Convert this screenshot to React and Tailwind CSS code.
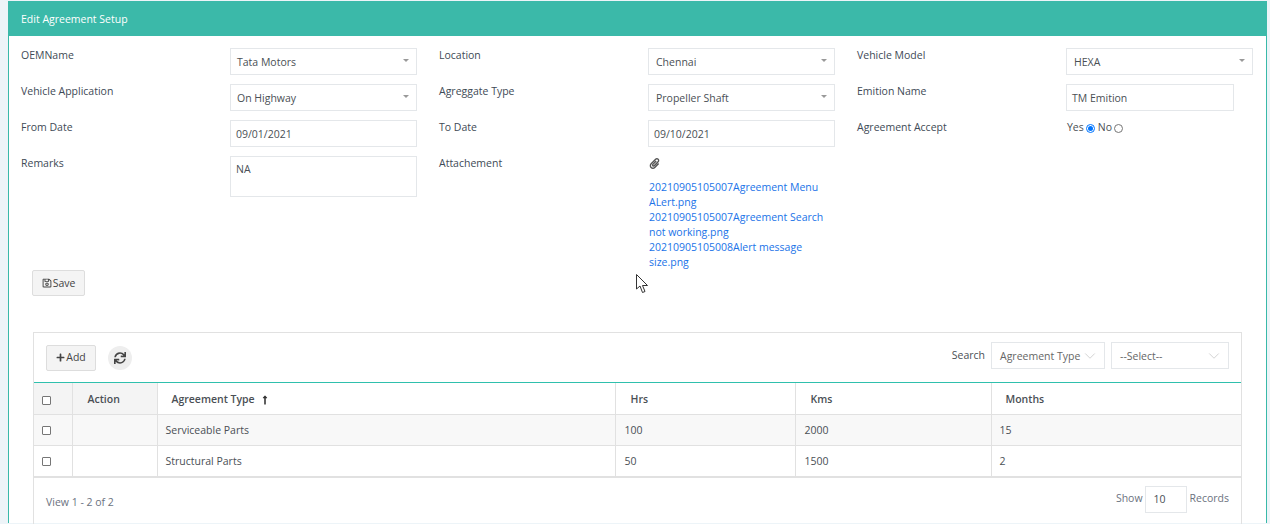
import React from 'react';
import { ChevronDown } from 'lucide-react';
import { FaPaperclip, FaPlus, FaRegSave, FaSync, FaLongArrowAltUp } from 'react-icons/fa';

const Label = ({ children }) => (
  <div className="w-[209px] shrink-0 pt-[3px] leading-[15px] text-[#3e4a56]">{children}</div>
);

const SelectBox = ({ value, inset = 'pl-[6px]' }) => (
  <div className={`mt-[3px] flex h-[27px] w-[187px] items-center justify-between border border-[#e4e7ea] bg-white pr-[7px] text-[#4a4f55] ${inset}`}>
    <span className="pt-[2px]">{value}</span>
    <span className="mb-[2px] h-0 w-0 border-x-[3px] border-t-[3px] border-x-transparent border-t-[#999]" />
  </div>
);

const TextBox = ({ value, width = 'w-[187px]' }) => (
  <div className={`mt-[3px] flex h-[27px] items-center border border-[#e4e7ea] bg-white pl-[5px] pt-[2px] text-[#4a4f55] ${width}`}>
    {value}
  </div>
);

const Field = ({ label, children }) => (
  <div className="flex h-[36px] w-[418px] shrink-0">
    <Label>{label}</Label>
    {children}
  </div>
);

const Check = () => (
  <span className="block h-[9px] w-[9px] rounded-[1px] border border-[#767676] bg-white" />
);

const rows = [
  { type: 'Serviceable Parts', hrs: '100', kms: '2000', months: '15', bg: 'bg-[#f8f8f8]' },
  { type: 'Structural Parts', hrs: '50', kms: '1500', months: '2', bg: 'bg-white' },
];

const App = () => {
  return (
    <div className="h-[524px] w-[1270px] overflow-hidden bg-[#edf4f8] pl-2 pr-[3px] pt-px font-['Open_Sans',sans-serif] text-[10.5px] text-[#3e4a56]">
      <div className="h-[522px] border-x border-[#39b9a9] bg-white">
        <div className="-mx-px flex h-[35px] items-center bg-[#3bb9a9] pl-[13px] pt-[2px] text-white">Edit Agreement Setup</div>

        <div className="pl-3 pt-[9px]">
          <div className="flex">
            <Field label="OEMName"><SelectBox value="Tata Motors" /></Field>
            <Field label="Location"><SelectBox value="Chennai" inset="pl-[7px]" /></Field>
            <Field label="Vehicle Model"><SelectBox value="HEXA" inset="pl-[7px]" /></Field>
          </div>
          <div className="flex">
            <Field label="Vehicle Application"><SelectBox value="On Highway" /></Field>
            <Field label="Agreggate Type"><SelectBox value="Propeller Shaft" inset="pl-[7px]" /></Field>
            <Field label="Emition Name"><TextBox value="TM Emition" width="w-[168px]" /></Field>
          </div>
          <div className="flex">
            <Field label="From Date"><TextBox value="09/01/2021" /></Field>
            <Field label="To Date"><TextBox value="09/10/2021" /></Field>
            <Field label="Agreement Accept">
              <div className="ml-px mt-[2px] flex h-[15px] items-center pt-[3px] text-[#4a4f55]">
                <span>Yes</span>
                <span className="ml-[2px] flex h-[9px] w-[9px] items-center justify-center rounded-full border border-[#0075ff]">
                  <span className="h-[5px] w-[5px] rounded-full bg-[#0075ff]" />
                </span>
                <span className="ml-[3px]">No</span>
                <span className="ml-[2px] h-[9px] w-[9px] rounded-full border border-[#767676]" />
              </div>
            </Field>
          </div>
          <div className="flex">
            <div className="flex w-[418px] shrink-0">
              <Label><span className="text-[#3e4a56]">Remarks</span></Label>
              <div className="mt-[3px] h-[41px] w-[187px] border border-[#e4e7ea] pl-[5px] pt-[5px] text-[#4a4f55]">NA</div>
            </div>
            <div className="flex w-[418px] shrink-0">
              <Label>Attachement</Label>
              <div className="w-[187px] pt-[5px]">
                <FaPaperclip className="ml-px h-[11px] w-[11px] text-[#555]" />
                <div className="ml-px mt-[11px] w-[180px] leading-[15px] text-[#1a73e8]">
                  <div>20210905105007Agreement Menu ALert.png</div>
                  <div>20210905105007Agreement Search not working.png</div>
                  <div>20210905105008Alert message size.png</div>
                </div>
              </div>
            </div>
          </div>
        </div>

        <div className="pl-[23px]">
          <button className="flex h-[26px] w-[53px] items-center justify-center rounded-[2px] border border-[#ddd] bg-[#f4f4f4] text-[#444]">
            <FaRegSave className="h-[10px] w-[10px]" />
            <span className="ml-px pt-[2px]">Save</span>
          </button>
        </div>

        <div className="ml-[24px] mt-[36px] h-[200px] w-[1209px] border-x border-t border-[#e1e1e1]">
          <div className="flex h-[50px] items-center justify-between border-b border-[#2fc0ad] pl-3 pr-3">
            <div className="flex items-center">
              <button className="flex h-[26px] w-[50px] items-center justify-center rounded-[2px] border border-[#ddd] bg-[#f4f4f4] text-[#444]">
                <FaPlus className="h-[9px] w-[9px]" />
                <span className="ml-px">Add</span>
              </button>
              <span className="ml-3 flex h-6 w-6 items-center justify-center rounded-full bg-[#eee] text-[#444]">
                <FaSync className="h-[12px] w-[12px]" />
              </span>
            </div>
            <div className="mb-[4px] flex items-center text-[#4a4f55]">
              <span className="mr-[6px] pt-px">Search</span>
              <div className="flex h-[27px] w-[114px] items-center justify-between border border-[#e4e7ea] pl-2 pr-[5px] text-[#666]">
                <span className="whitespace-nowrap pt-[2px]">Agreement Type</span>
                <ChevronDown className="h-[18px] w-[18px] shrink-0 text-[#c4c4c4]" strokeWidth={1} />
              </div>
              <div className="ml-[6px] flex h-[27px] w-[118px] items-center justify-between border border-[#e4e7ea] pl-2 pr-[5px] text-[#666]">
                <span className="pt-[2px]">--Select--</span>
                <ChevronDown className="h-[18px] w-[18px] shrink-0 text-[#c4c4c4]" strokeWidth={1} />
              </div>
            </div>
          </div>

          <table className="w-full table-fixed border-collapse text-[#4a4f55]">
            <colgroup>
              <col className="w-[38px]" />
              <col className="w-[85px]" />
              <col className="w-[458px]" />
              <col className="w-[180px]" />
              <col className="w-[196px]" />
              <col />
            </colgroup>
            <thead>
              <tr className="h-[31px] font-semibold">
                <th className="border-b border-r border-[#e1e1e1] bg-[#f4f4f4] pl-[8px] pt-[4px] text-left"><Check /></th>
                <th className="border-b border-r border-[#e1e1e1] bg-[#f4f4f4] pl-[15px] pt-[4px] text-left font-semibold">Action</th>
                <th className="border-b border-r border-[#e1e1e1] pl-[14px] pt-[4px] text-left font-semibold">
                  <span className="inline-flex items-center">
                    Agreement Type
                    <FaLongArrowAltUp className="ml-[5px] h-[10px] w-[10px] text-[#333]" />
                  </span>
                </th>
                <th className="border-b border-r border-[#e1e1e1] pl-[15px] pt-[4px] text-left font-semibold">Hrs</th>
                <th className="border-b border-r border-[#e1e1e1] pl-[15px] pt-[4px] text-left font-semibold">Kms</th>
                <th className="border-b border-[#e1e1e1] pl-[14px] pt-[4px] text-left font-semibold">Months</th>
              </tr>
            </thead>
            <tbody>
              {rows.map((row) => (
                <tr key={row.type} className={`h-[31px] ${row.bg}`}>
                  <td className="border-b border-r border-[#e1e1e1] pl-[8px] pt-[2px]"><Check /></td>
                  <td className="border-b border-r border-[#e1e1e1]"></td>
                  <td className="border-b border-r border-[#e1e1e1] pl-[8px] pt-[2px]">{row.type}</td>
                  <td className="border-b border-r border-[#e1e1e1] pl-[9px] pt-[2px]">{row.hrs}</td>
                  <td className="border-b border-r border-[#e1e1e1] pl-[9px] pt-[2px]">{row.kms}</td>
                  <td className="border-b border-[#e1e1e1] pl-[8px] pt-[2px]">{row.months}</td>
                </tr>
              ))}
            </tbody>
          </table>

          <div className="flex h-[45px] items-center justify-between border-t border-[#e1e1e1] pl-3 pr-3 text-[#6b7280]">
            <span className="mt-[7px]">View 1 - 2 of 2</span>
            <div className="flex items-center">
              <span className="mb-[2px]">Show</span>
              <span className="ml-[2px] flex h-[27px] w-[42px] items-center border border-[#e4e7ea] pl-2 text-[#4a4f55]">10</span>
              <span className="mb-[2px] ml-[3px]">Records</span>
            </div>
          </div>
        </div>
      </div>

      {/* mouse pointer caught in the screenshot */}
      <svg className="absolute left-[636px] top-[274px]" width="14" height="20" viewBox="0 0 14 20">
        <path d="M0.5 0.5 L0.5 15 L4 12 L6.5 18.5 L9 17.5 L6.5 11.5 L11.5 11.5 Z" fill="white" stroke="#333" strokeWidth="1" />
      </svg>
    </div>
  );
};

export default App;
